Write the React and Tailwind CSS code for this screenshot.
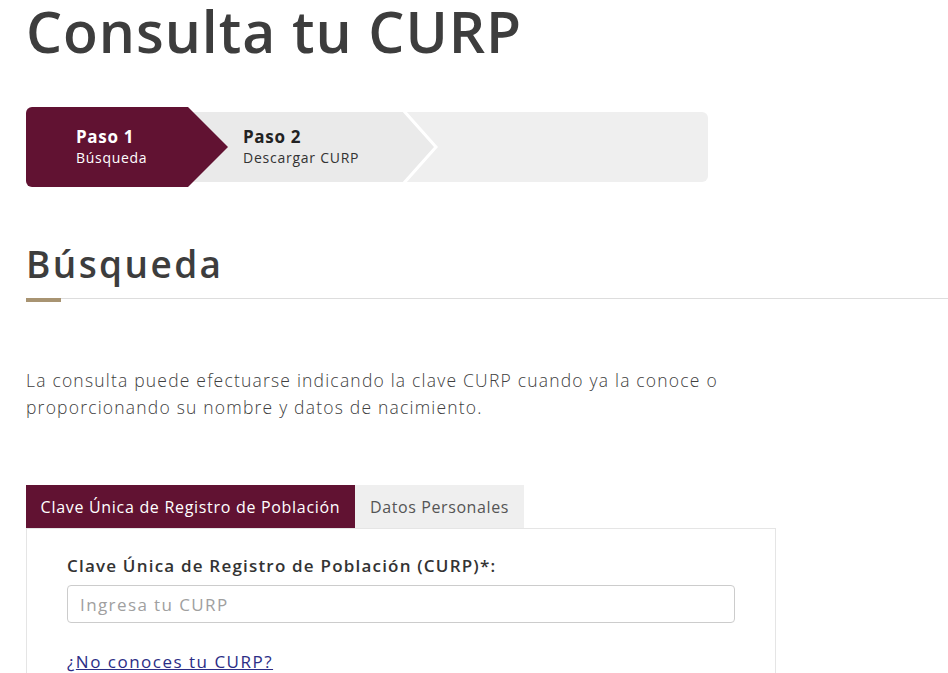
import React from "react";

const font = { fontFamily: '"Open Sans", "Liberation Sans", sans-serif' };

function Stepper() {
  return (
    <div className="flex items-center w-[682px] h-[80px] mt-[45px]">
      <div className="relative z-10 shrink-0 w-[202px] h-[80px] bg-[#611232] rounded-l-md pl-[50px] flex flex-col justify-center [clip-path:polygon(0_0,162px_0,202px_50%,162px_100%,0_100%)]">
        <span className="text-[17px] font-bold text-white leading-[21px] tracking-[0.7px]">Paso 1</span>
        <span className="text-[14px] text-white leading-[21px] tracking-[0.7px]">Búsqueda</span>
      </div>
      <div className="relative flex-1 h-[70px] -ml-[40px] bg-[#efefef] rounded-r-md flex">
        <div className="w-[248px] h-full bg-[#eaeaea] pl-[55px] flex flex-col justify-center [clip-path:polygon(0_0,217px_0,248px_50%,217px_100%,0_100%)]">
          <span className="text-[17px] font-bold text-[#222] leading-[21px] tracking-[0.7px]">Paso 2</span>
          <span className="text-[14px] text-[#333] leading-[21px] tracking-[0.75px]">Descargar CURP</span>
        </div>
        <svg className="absolute left-[215px] top-0" width="36" height="70" viewBox="0 0 36 70">
          <polyline points="1,-1 33,35 1,71" fill="none" stroke="#ffffff" strokeWidth="3" />
        </svg>
      </div>
    </div>
  );
}

export default function App() {
  return (
    <div className="bg-white min-h-[673px] w-[948px] overflow-hidden text-[#404040]" style={font}>
      <div className="pl-[26px]">
        <h1 className="text-[57px] font-semibold leading-[62px] text-[#3d3d3d] tracking-[0.95px]">Consulta tu CURP</h1>
        <Stepper />
        <h2 className="mt-[55px] text-[37px] font-semibold text-[#3d3d3d] leading-[44px] tracking-[2.4px]">Búsqueda</h2>
        <div className="mt-[12px] flex items-start">
          <div className="w-[35px] h-[4px] bg-[#a89472]" />
          <div className="flex-1 h-px bg-[#dddddd]" />
        </div>
        <p className="mt-[65px] w-[735px] text-[17.5px] leading-[27px] font-light text-[#404040] tracking-[1.2px]">
          La consulta puede efectuarse indicando la clave CURP cuando ya la conoce o proporcionando su nombre y datos de nacimiento.
        </p>
        <div className="mt-[64px] w-[750px]">
          <div className="flex h-[43px]">
            <button className="w-[329px] bg-[#611232] text-white text-[16px] tracking-[0.7px]">Clave Única de Registro de Población</button>
            <button className="w-[169px] bg-[#efefef] text-[#555] text-[16px] tracking-[0.6px]">Datos Personales</button>
          </div>
          <div className="border border-[#e5e5e5] px-[40px] pt-[26px] pb-[30px]">
            <label className="block text-[17px] font-semibold text-[#333] leading-[22px] tracking-[1.2px]">
              Clave Única de Registro de Población (CURP)*:
            </label>
            <input
              className="mt-[8px] block w-[668px] h-[38px] border border-[#cccccc] rounded-[4px] px-[12px] text-[17px] tracking-[1.4px] placeholder:text-[#a0a0a0]"
              placeholder="Ingresa tu CURP"
            />
            <p className="mt-[27px] text-[17px] text-[#2b2d86] leading-[24px] tracking-[1.5px]">
              ¿<a href="#" className="underline">No conoces tu CURP?</a>
            </p>
          </div>
        </div>
      </div>
    </div>
  );
}
